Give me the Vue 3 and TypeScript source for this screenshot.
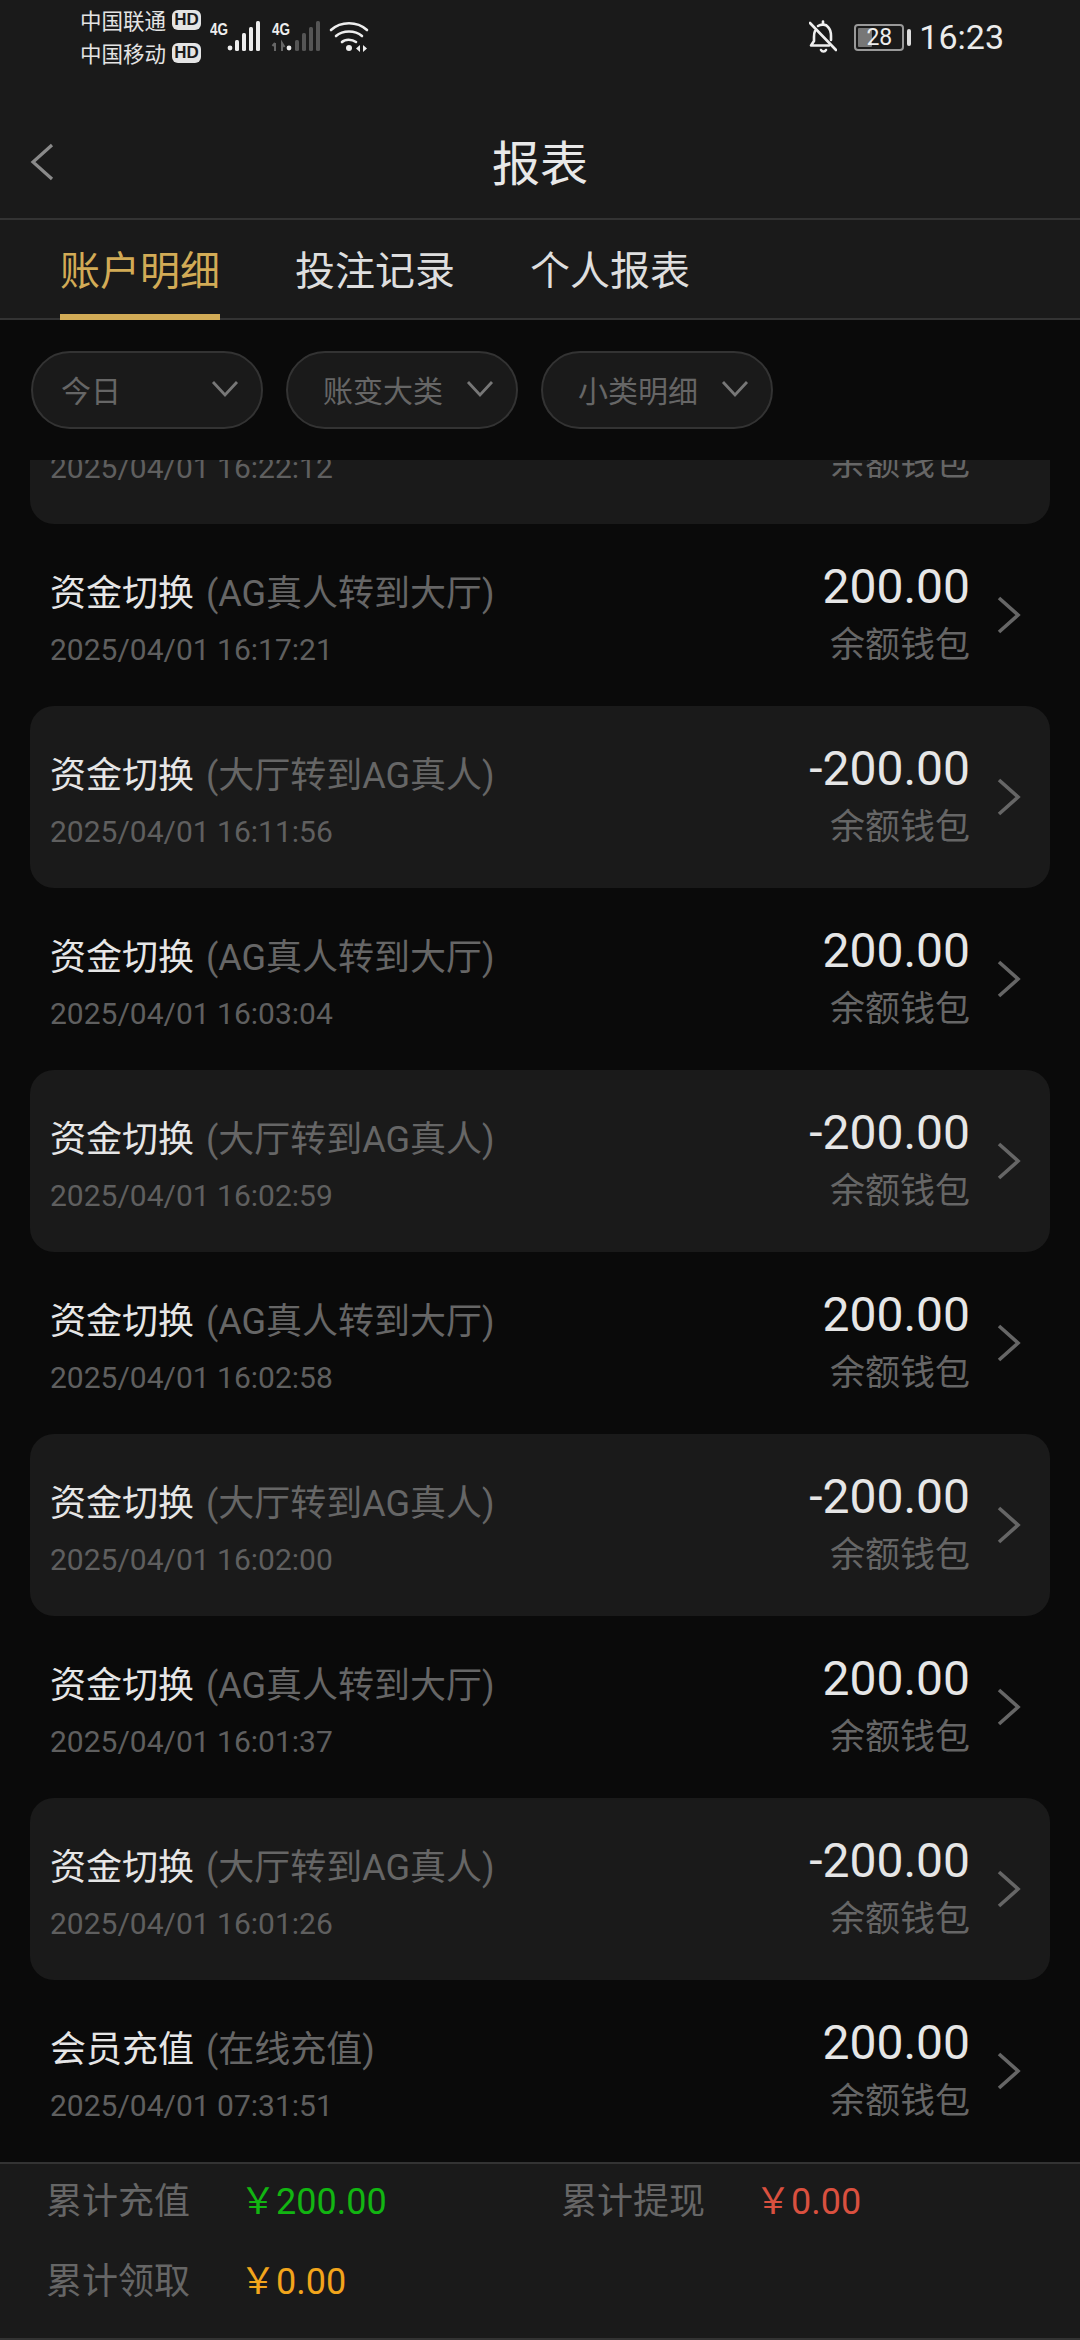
<template>
  <div class="page">
    <header class="top">
      <div class="status">
        <div class="carriers">
          <div class="carrier" v-for="name in carriers" :key="name">
            <span>{{ name }}</span><i class="hd">HD</i>
          </div>
        </div>
        <svg class="signal" width="160" height="34" viewBox="0 0 160 34">
          <text x="0" y="15" class="net" textLength="18" lengthAdjust="spacingAndGlyphs">4G</text>
          <g fill="#eee">
            <circle cx="20" cy="28" r="2.4" />
            <rect x="25" y="20" width="4" height="11" rx="1.5" />
            <rect x="32" y="13" width="4" height="18" rx="1.5" />
            <rect x="39" y="7" width="4" height="24" rx="1.5" />
            <rect x="46" y="1" width="4" height="30" rx="1.5" />
          </g>
          <text x="62" y="15" class="net" textLength="18" lengthAdjust="spacingAndGlyphs">4G</text>
          <path d="M65 23v8M65 23l-2.500 3M72 31v-8l2.500 4" stroke="#666" stroke-width="2" fill="none" />
          <circle cx="79" cy="28" r="2.400" fill="#eee" />
          <g fill="#555">
            <rect x="85" y="20" width="4" height="11" rx="1.500" />
            <rect x="92" y="13" width="4" height="18" rx="1.500" />
            <rect x="99" y="7" width="4" height="24" rx="1.500" />
            <rect x="106" y="1" width="4" height="30" rx="1.500" />
          </g>
          <g fill="none" stroke="#eee" stroke-width="2.600" stroke-linecap="round">
            <path d="M121 10c10-9 26-9 36 0" />
            <path d="M126 16c7-6 19-6 26 0" />
            <path d="M132 22c3-3 10-3 14 0" />
          </g>
          <circle cx="139" cy="28" r="3" fill="#eee" />
          <path d="M150 25v7l-4-3.500zM153 25v7l4-3.500z" fill="#eee" />
        </svg>
        <div class="status-right">
          <svg width="28" height="34" viewBox="0 0 28 34">
            <g fill="none" stroke="#eee" stroke-width="2.600" stroke-linecap="round" stroke-linejoin="round">
              <path d="M6 11c-1 2-1 4-1 6v4l-3 4.500h18" />
              <path d="M9 6c3-2 8-2 10 1 2 2 3 5 3 9v4" />
              <path d="M1 3l26 27" />
              <path d="M12 30c1 2 4 2 5 0" />
              <path d="M14 1.500v3" />
            </g>
          </svg>
          <div class="battery">
            <div class="battery-fill"></div>
            <span>28</span>
          </div>
          <div class="battery-nub"></div>
          <span class="clock">16:23</span>
        </div>
      </div>

      <div class="nav">
        <svg class="back" width="24" height="38" viewBox="0 0 24 38">
          <path d="M22 2L3 19l19 17" fill="none" stroke="#8a8a8a" stroke-width="3.200" />
        </svg>
        <h1 class="title">报表</h1>
      </div>

      <div class="tabs">
        <div v-for="(tab, index) in tabs" :key="tab" class="tab" :class="{ active: index === 0 }">{{ tab }}</div>
      </div>
    </header>

    <div class="filters">
      <div v-for="item in filters" :key="item" class="pill">
        <span>{{ item }}</span>
        <svg width="28" height="18" viewBox="0 0 28 18">
          <path d="M2 2l12 13L26 2" fill="none" stroke="#777" stroke-width="2.800" />
        </svg>
      </div>
    </div>

    <div class="list">
      <div class="rows">
        <div v-for="(row, index) in rows" :key="row.time" class="row" :class="{ card: index % 2 === 0 }">
          <div class="row-left">
            <div class="row-title">{{ row.kind }} <span>({{ row.detail }})</span></div>
            <div class="row-time">{{ row.time }}</div>
          </div>
          <div class="row-right">
            <div class="amount">{{ row.amount }}</div>
            <div class="wallet">余额钱包</div>
          </div>
          <svg class="chevron" width="24" height="38" viewBox="0 0 24 38">
            <path d="M2 2l19 17L2 36" fill="none" stroke="#666" stroke-width="3.600" />
          </svg>
        </div>
      </div>
    </div>

    <footer class="summary">
      <div v-for="item in totals" :key="item.label" class="total">
        <span class="total-label">{{ item.label }}</span>
        <span class="total-value" :class="item.tone">￥{{ item.value }}</span>
      </div>
    </footer>
  </div>
</template>

<script setup lang="ts">
interface LedgerRow {
  kind: string
  detail: string
  time: string
  amount: string
}

const carriers = ['中国联通', '中国移动']
const tabs = ['账户明细', '投注记录', '个人报表']
const filters = ['今日', '账变大类', '小类明细']

const toHall = { kind: '资金切换', detail: 'AG真人转到大厅', amount: '200.00' }
const toAg = { kind: '资金切换', detail: '大厅转到AG真人', amount: '-200.00' }

const rows: LedgerRow[] = [
  { ...toAg, time: '2025/04/01 16:22:12' },
  { ...toHall, time: '2025/04/01 16:17:21' },
  { ...toAg, time: '2025/04/01 16:11:56' },
  { ...toHall, time: '2025/04/01 16:03:04' },
  { ...toAg, time: '2025/04/01 16:02:59' },
  { ...toHall, time: '2025/04/01 16:02:58' },
  { ...toAg, time: '2025/04/01 16:02:00' },
  { ...toHall, time: '2025/04/01 16:01:37' },
  { ...toAg, time: '2025/04/01 16:01:26' },
  { kind: '会员充值', detail: '在线充值', amount: '200.00', time: '2025/04/01 07:31:51' },
]

const totals = [
  { label: '累计充值', value: '200.00', tone: 'green' },
  { label: '累计提现', value: '0.00', tone: 'red' },
  { label: '累计领取', value: '0.00', tone: 'orange' },
]
</script>

<style scoped>
.page {
  width: 1080px;
  height: 2340px;
  display: flex;
  flex-direction: column;
  background: #0a0a0a;
  font-family: Roboto, "Noto Sans CJK SC", sans-serif;
  overflow: hidden;
}

.top {
  background: #1a1a1a;
  color: #e6e6e6;
}

.status {
  height: 108px;
  display: flex;
  align-items: flex-start;
  padding: 0 76px 0 80px;
  box-sizing: border-box;
}

.carriers {
  padding-top: 3px;
  width: 130px;
}

.carrier {
  height: 33px;
  display: flex;
  align-items: center;
  gap: 6px;
  font-size: 21.500px;
  color: #e4e4e4;
}

.hd {
  width: 29px;
  height: 20px;
  border-radius: 6px;
  background: #e4e4e4;
  color: #1a1a1a;
  font: normal 700 17px/20px "Liberation Sans", sans-serif;
  text-align: center;
}

.signal {
  margin-top: 20px;
}

.net {
  font: 700 17px "Liberation Sans", sans-serif;
  fill: #eee;
}

.status-right {
  margin-left: auto;
  height: 34px;
  margin-top: 20px;
  display: flex;
  align-items: center;
}

.battery {
  position: relative;
  width: 50px;
  height: 27px;
  margin-left: 17px;
  border: 2px solid #999;
  border-radius: 4px;
  box-sizing: border-box;
  overflow: hidden;
  font-size: 23px;
  line-height: 23px;
  text-align: center;
  color: #eee;
}

.battery-fill {
  position: absolute;
  left: 2px;
  top: 2px;
  bottom: 2px;
  width: 14px;
  background: #777;
  border-radius: 1px;
}

.battery > span {
  position: relative;
}

.battery-nub {
  width: 4px;
  height: 17px;
  margin-left: 3px;
  background: #ddd;
  border-radius: 2px;
}

.clock {
  margin-left: 8px;
  font-size: 34px;
  color: #ececec;
}

.nav {
  position: relative;
  height: 110px;
  display: flex;
  align-items: center;
  justify-content: center;
  border-bottom: 2px solid #333;
}

.back {
  position: absolute;
  left: 30px;
  top: 35px;
}

.title {
  margin: 0 0 6px;
  font-size: 48px;
  font-weight: 400;
  color: #e8e8e8;
}

.tabs {
  height: 98px;
  display: flex;
  gap: 75px;
  padding-left: 60px;
  border-bottom: 2px solid #333;
}

.tab {
  position: relative;
  height: 98px;
  font-size: 40px;
  line-height: 104px;
  color: #dedede;
}

.tab.active {
  color: #d2ab56;
}

.tab.active::after {
  content: "";
  position: absolute;
  left: 0;
  right: 0;
  bottom: -2px;
  height: 6px;
  background: #d2ab56;
}

.filters {
  height: 140px;
  flex: none;
  display: flex;
  gap: 23px;
  padding: 31px 0 0 31px;
  box-sizing: border-box;
}

.pill {
  width: 232px;
  height: 78px;
  display: flex;
  align-items: center;
  justify-content: space-between;
  box-sizing: border-box;
  padding: 0 22px 2px 28px;
  border: 2px solid #333;
  border-radius: 39px;
  background: #1a1a1a;
  font-size: 30px;
  color: #666;
}

.pill + .pill {
  padding-left: 35px;
}

.list {
  flex: 1;
  min-height: 0;
  overflow: hidden;
}

/* list is scrolled a little, the first row sits partly under the filters */
.rows {
  margin: -118px 30px 0;
}

.row {
  height: 182px;
  display: flex;
  align-items: center;
  padding: 0 29px 0 20px;
  box-sizing: border-box;
  border-radius: 24px;
}

.row.card {
  background: #1a1a1a;
}

.row-left {
  flex: 1;
  margin-top: 6px;
}

.row-title {
  font-size: 36px;
  line-height: 50px;
  color: #e6e6e6;
}

.row-title span {
  margin-left: 3px;
  color: #666;
}

.row-time {
  margin-top: 13px;
  font-size: 30px;
  line-height: 36px;
  color: #5f5f5f;
}

.row-right {
  text-align: right;
  margin-top: -2px;
}

.amount {
  font-size: 48px;
  line-height: 52px;
  color: #e6e6e6;
}

.wallet {
  margin-top: 11px;
  font-size: 35px;
  line-height: 44px;
  color: #666;
}

.chevron {
  margin-left: 27px;
}

.summary {
  height: 178px;
  flex: none;
  display: grid;
  grid-template-columns: 515px 1fr;
  grid-auto-rows: 80px;
  padding-left: 46px;
  box-sizing: border-box;
  border-top: 2px solid #333;
  border-bottom: 2px solid #333;
  background: #1a1a1a;
}

.total {
  display: flex;
  align-items: center;
  margin-top: -13px;
}

.total-label {
  width: 194px;
  font-size: 36px;
  color: #666;
}

.total-value {
  font-size: 36px;
}

.green { color: #12b512; }
.red { color: #d9503f; }
.orange { color: #f2a51c; }
</style>

<style>
html,
body {
  background: #0a0a0a;
}
</style>
